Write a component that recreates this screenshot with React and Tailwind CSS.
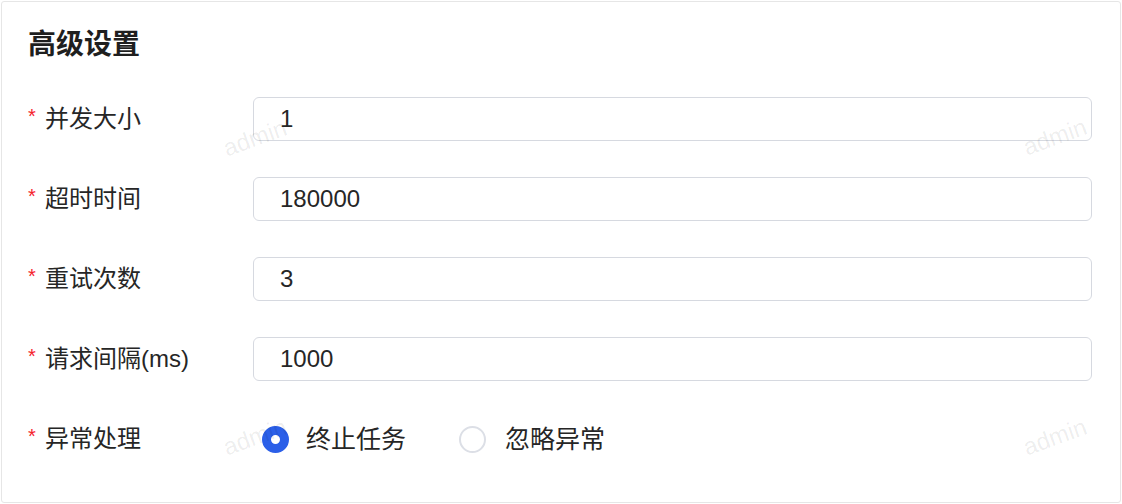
import React from "react";

const font = { fontFamily: '"Liberation Sans", "Noto Sans CJK SC", sans-serif' };

function Label({ children }) {
  return (
    <div className="flex items-center w-[225px] shrink-0 h-full">
      <span className="text-[#f5222d] text-[20px] leading-none w-[17px] -mt-[7px]">*</span>
      <span className="text-[24px] text-[#262626] leading-none">{children}</span>
    </div>
  );
}

function InputRow({ label, value }) {
  return (
    <div className="flex items-center h-[44px]">
      <Label>{label}</Label>
      <div className="flex-1 h-[44px] border border-[#d6d9e0] rounded-[6px] flex items-center pl-[26px] text-[24px] text-[#262626] bg-white">
        {value}
      </div>
    </div>
  );
}

function Watermark({ className }) {
  return (
    <span
      className={
        "absolute pointer-events-none z-10 w-[80px] h-[30px] flex items-center justify-center text-[24px] text-[rgba(0,0,0,0.08)] -rotate-[20deg] " +
        className
      }
    >
      admin
    </span>
  );
}

export default function App() {
  return (
    <div className="w-[1122px] h-[504px] p-[1px] bg-white" style={font}>
      <div className="relative h-[502px] border border-[#e6e6e6] rounded-[3px] bg-white pl-[26px] pr-[28px] pt-[24px] overflow-hidden">
        <div className="h-[38px] flex items-center text-[28px] font-semibold text-[#1f1f1f]">高级设置</div>
        <div className="mt-[33px] flex flex-col gap-[36px]">
          <InputRow label="并发大小" value="1" />
          <InputRow label="超时时间" value="180000" />
          <InputRow label="重试次数" value="3" />
          <InputRow label="请求间隔(ms)" value="1000" />
          <div className="flex items-center h-[44px]">
            <Label>异常处理</Label>
            <div className="flex items-center ml-[9px]">
              <span className="w-[27px] h-[27px] rounded-full border-[9px] border-[#2b5fe8] bg-white" />
              <span className="ml-[17px] text-[25px] text-[#262626] leading-none">终止任务</span>
              <span className="ml-[53px] w-[27px] h-[27px] rounded-full border-2 border-[#dcdfe6] bg-white" />
              <span className="ml-[19px] text-[25px] text-[#262626] leading-none">忽略异常</span>
            </div>
          </div>
        </div>
        <Watermark className="left-[213px] top-[121px]" />
        <Watermark className="left-[1013px] top-[120px]" />
        <Watermark className="left-[213px] top-[420px]" />
        <Watermark className="left-[1013px] top-[420px]" />
      </div>
    </div>
  );
}
